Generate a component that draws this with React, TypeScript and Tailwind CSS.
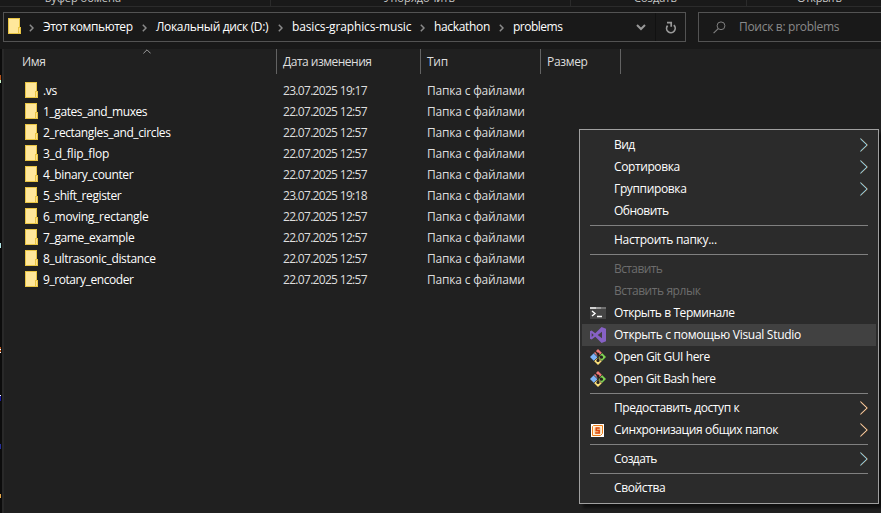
import type { ReactNode } from "react";

const files: [string, string, string][] = [
  [".vs", "23.07.2025 19:17", "tracking-[-0.3px]"],
  ["1_gates_and_muxes", "22.07.2025 12:57", "tracking-[-0.41px]"],
  ["2_rectangles_and_circles", "22.07.2025 12:57", "tracking-[-0.38px]"],
  ["3_d_flip_flop", "22.07.2025 12:57", "tracking-[-0.23px]"],
  ["4_binary_counter", "22.07.2025 12:57", "tracking-[-0.38px]"],
  ["5_shift_register", "23.07.2025 19:18", "tracking-[-0.4px]"],
  ["6_moving_rectangle", "22.07.2025 12:57", "tracking-[-0.28px]"],
  ["7_game_example", "22.07.2025 12:57", "tracking-[-0.36px]"],
  ["8_ultrasonic_distance", "22.07.2025 12:57", "tracking-[-0.33px]"],
  ["9_rotary_encoder", "22.07.2025 12:57", "tracking-[-0.43px]"],
];

function Folder() {
  return (
    <svg width="13" height="16" viewBox="0 0 13 16" className="block shrink-0" shapeRendering="crispEdges">
      <path d="M0 0h12v9h1v7H0z" fill="#e9c544" />
      <path d="M1 1h10v8h-1v6H1z" fill="#ffe79b" />
      <path d="M11 10h1v5h-1z" fill="#ffe08a" />
    </svg>
  );
}

function Crumb({ className, children }: { className: string; children: ReactNode }) {
  return (
    <div className="flex shrink-0 items-center">
      <svg width="5" height="8" viewBox="0 0 5 8" className="mr-[9px] mt-px block shrink-0">
        <path d="M.8 .8L4 4 .8 7.2" fill="none" stroke="#8a8a8a" strokeWidth="1.5" />
      </svg>
      <span className={className}>{children}</span>
    </div>
  );
}

function Terminal() {
  return (
    <svg width="16" height="12" viewBox="0 0 16 12" shapeRendering="crispEdges">
      <path d="M0 0h16v12H0z" fill="#454545" />
      <path d="M0 0h6v2H0z" fill="#d0d0d0" />
      <path d="M6 0h5v2H6z" fill="#999" />
      <path d="M11 0h5v2h-5z" fill="#707070" />
      <path d="M2 4l3 2.5L2 9M7 9.5h5" stroke="#fff" strokeWidth="1.4" fill="none" shapeRendering="auto" />
    </svg>
  );
}

function VisualStudio() {
  return (
    <svg width="16" height="16" viewBox="0 0 16 16">
      <path fillRule="evenodd" d="M11.6 0L16 1.8v12.4L11.6 16 5.3 9.7 1.6 12.6 0 11.8V4.2l1.6-.8 3.7 2.9zM12 4.8L7.7 8l4.3 3.2zM1.7 6v4l2-2z" fill="#8661c5" />
    </svg>
  );
}

function Git() {
  return (
    <svg width="16" height="16" viewBox="0 0 16 16">
      <path d="M8 0l4 4-4 4-4-4z" fill="#f07878" />
      <path d="M4 4l4 4-4 4-4-4z" fill="#7db4f8" />
      <path d="M12 4l4 4-4 4-4-4z" fill="#7fd152" />
      <path d="M8 8l4 4-4 4-4-4z" fill="#fbe07a" />
      <path d="M5.2 2.3L8 5v7M8 5.2l3.2 3" stroke="#27231f" strokeWidth="1.3" fill="none" />
      <path d="M3.7 4.3l8 8M12.2 3.8l-8.4 8.4" stroke="#27231f" strokeWidth=".6" />
      <circle cx="8" cy="5" r="1.5" fill="#27231f" />
      <circle cx="8" cy="11.4" r="1.6" fill="#27231f" />
      <circle cx="11.4" cy="8.2" r="1.6" fill="#27231f" />
    </svg>
  );
}

function Sync() {
  return (
    <svg width="13" height="13" viewBox="0 0 13 13" className="mr-px">
      <path d="M0 0h13v13H0z" fill="#fff" />
      <path d="M2.5 1.5h9v8l-2 2h-8v-9z" fill="#fff1dc" stroke="#ee7d16" />
      <path d="M3.5 3.5h6v6h-6z" fill="#f9c48c" />
      <path d="M8.7 4H5.3v2.4h2.9v2.5H4.2" fill="none" stroke="#d9480f" strokeWidth="1.5" />
    </svg>
  );
}

type ItemProps = { label: string; track: string; icon?: ReactNode; sub?: "cool" | "warm"; disabled?: boolean; active?: boolean };

function Item({ label, track, icon, sub, disabled, active }: ItemProps) {
  return (
    <div className={`mx-[2px] flex h-[22px] items-center pr-[8px] ${active ? "bg-[#414141]" : ""} ${disabled ? "text-[#6d6d6d]" : "text-white"}`}>
      <span className="flex w-8 shrink-0 justify-center">{icon}</span>
      <span className={`flex-1 ${track}`}>{label}</span>
      {sub && (
        <svg width="8" height="14" viewBox="0 0 8 14" className="mb-px">
          <path d="M.9 .7L7.5 7 .9 13.3" fill="none" stroke={sub === "cool" ? "#d9a066" : "#e8964e"} strokeWidth=".9" />
          <path d="M.3 .7L6.9 7 .3 13.3" fill="none" stroke={sub === "cool" ? "#8fdcf8" : "#ffdcb8"} strokeWidth="1" />
        </svg>
      )}
    </div>
  );
}

function Separator() {
  return <div className="mx-[10px] my-[3px] h-px bg-[#808080]" />;
}

export default function App() {
  return (
    <div className="relative flex h-[513px] w-[881px] flex-col overflow-hidden whitespace-nowrap bg-[#191919] font-['Open_Sans','Noto_Sans',sans-serif] text-[12px] leading-[16px] text-white">
      <div className="flex h-[7px] shrink-0 items-end overflow-hidden border-b border-[#2b2b2b] text-[11px] text-[#c8c8c8]">
        <div className="flex h-[6px] w-[271px] items-end justify-end border-r border-[#2b2b2b] pr-[149px]"><span>Буфер обмена</span></div>
        <div className="flex h-[6px] w-[300px] items-end justify-end border-r border-[#2b2b2b] pr-[115px]"><span>Упорядочить</span></div>
        <div className="flex h-[6px] w-[176px] items-end justify-end border-r border-[#2b2b2b] pr-[69px]"><span>Создать</span></div>
        <div className="flex h-[6px] items-end pl-[50px]"><span className="tracking-[-0.2px]">Открыть</span></div>
      </div>

      <div className="flex h-[42px] shrink-0 gap-3 pl-[3px] pt-[5px]">
        <div className="flex h-[30px] w-[683px] shrink-0 items-center border border-[#535353] pl-[4px]">
          <div className="-mt-[2px]"><Folder /></div>
          <div className="ml-[8px] flex flex-1 items-center">
            <Crumb className="w-[99px] tracking-[-0.43px]">Этот компьютер</Crumb>
            <Crumb className="w-[122px] tracking-[-0.33px]">Локальный диск (D:)</Crumb>
            <Crumb className="w-[128px] tracking-[-0.14px]">basics-graphics-music</Crumb>
            <Crumb className="w-[65px] tracking-[-0.33px]">hackathon</Crumb>
            <Crumb className="w-[60px] tracking-[-0.5px]">problems</Crumb>
          </div>
          <svg width="10" height="7" viewBox="0 0 10 7" className="mr-[9px] mt-px"><path d="M1 1l4 4 4-4" fill="none" stroke="#999" strokeWidth="2" /></svg>
          <div className="flex h-full w-[30px] items-center justify-center border-l border-[#111]">
            <svg width="12" height="13" viewBox="0 0 12 13"><path d="M2.6 4.6A4.3 4.3 0 1 0 8.8 4.2M2 1.6h4.2v4.2" fill="none" stroke="#999" strokeWidth="1.7" /></svg>
          </div>
        </div>
        <div className="flex h-[30px] w-[190px] shrink-0 items-center border border-[#535353] pl-[14px] text-[#8a8a8a]">
          <svg width="13" height="13" viewBox="0 0 13 13"><circle cx="8" cy="4.8" r="3.9" fill="none" stroke="#808080" /><path d="M5.2 7.6L.6 12.2" stroke="#808080" strokeWidth="1.1" /></svg>
          <span className="ml-[13px] tracking-[-0.3px]">Поиск в: problems</span>
        </div>
      </div>

      <div className="flex min-h-0 flex-1">
        <div className="w-[2px] shrink-0 bg-[#0c0c0c] pt-[26px]">
          <div className="h-[5px] w-px bg-[#b4541c]" />
          <div className="h-[3px] w-px bg-[#c8f5c8]" />
          <div className="mt-[160px] h-[5px] w-px bg-[#b4e8e8]" />
          <div className="mt-[99px] h-[2px] w-px bg-[#b4541c]" />
          <div className="h-px w-px bg-white" />
          <div className="h-[2px] w-px bg-[#b4541c]" />
          <div className="h-px w-px bg-white" />
          <div className="mt-[42px] h-px w-px bg-white" />
          <div className="h-[5px] w-px bg-[#1a1aa0]" />
          <div className="mt-[43px] h-[5px] w-px bg-[#26309a]" />
          <div className="mt-[45px] h-[4px] w-px bg-[#e8a84a]" />
        </div>
        <div className="w-[2px] shrink-0 bg-[#292929]" />
        <div className="min-w-0 flex-1 bg-[#202020]">
          <div className="flex h-[25px] text-[#dedede]">
            <div className="flex w-[273px] border-r border-[#636363] pl-[18px] pt-[5px]">
              <span className="w-[121px] tracking-[-0.3px]">Имя</span>
              <svg width="8" height="5" viewBox="0 0 8 5" className="-mt-[5px]"><path d="M.4 4.4L4 .8l3.6 3.6" fill="none" stroke="#a0a0a0" /></svg>
            </div>
            <div className="w-[144px] border-r border-[#636363] pl-[6px] pt-[5px] tracking-[-0.5px]">Дата изменения</div>
            <div className="w-[120px] border-r border-[#636363] pl-[6px] pt-[5px] tracking-[-0.3px]">Тип</div>
            <div className="w-[80px] border-r border-[#636363] pl-[6px] pt-[5px] tracking-[-0.33px]">Размер</div>
          </div>
          <div className="pt-[6px]">
            {files.map(([name, date, track]) => (
              <div key={name} className="flex h-[21px] items-center pl-[21px]">
                <div className="-mt-[2px]"><Folder /></div>
                <span className={`w-[240px] pl-[5px] ${track}`}>{name}</span>
                <span className="w-[144px] pl-[5px] tracking-[-0.69px] text-[#dedede]">{date}</span>
                <span className="pl-[5px] tracking-[-0.19px] text-[#dedede]">Папка с файлами</span>
              </div>
            ))}
          </div>
        </div>
      </div>

      <div className="absolute left-[579px] top-[129px] h-[375px] w-[300px] border border-[#a0a0a0] bg-[#2b2b2b] py-[4px] shadow-[4px_4px_3px_rgba(0,0,0,0.55)]">
        <Item label="Вид" track="tracking-[-0.6px]" sub="cool" />
        <Item label="Сортировка" track="tracking-[-0.4px]" sub="cool" />
        <Item label="Группировка" track="tracking-[-0.36px]" sub="cool" />
        <Item label="Обновить" track="tracking-[-0.5px]" />
        <Separator />
        <Item label="Настроить папку..." track="tracking-[-0.3px]" />
        <Separator />
        <Item label="Вставить" track="tracking-[-0.6px]" disabled />
        <Item label="Вставить ярлык" track="tracking-[-0.42px]" disabled />
        <Item label="Открыть в Терминале" track="tracking-[-0.42px]" icon={<Terminal />} />
        <Item label="Открыть с помощью Visual Studio" track="tracking-[-0.29px]" icon={<VisualStudio />} active />
        <Item label="Open Git GUI here" track="tracking-[-0.4px]" icon={<Git />} />
        <Item label="Open Git Bash here" track="tracking-[-0.43px]" icon={<Git />} />
        <Separator />
        <Item label="Предоставить доступ к" track="tracking-[-0.4px]" sub="warm" />
        <Item label="Синхронизация общих папок" track="tracking-[-0.37px]" icon={<Sync />} sub="warm" />
        <Separator />
        <Item label="Создать" track="tracking-[-0.57px]" sub="cool" />
        <Separator />
        <Item label="Свойства" track="tracking-[-0.37px]" />
      </div>
    </div>
  );
}
